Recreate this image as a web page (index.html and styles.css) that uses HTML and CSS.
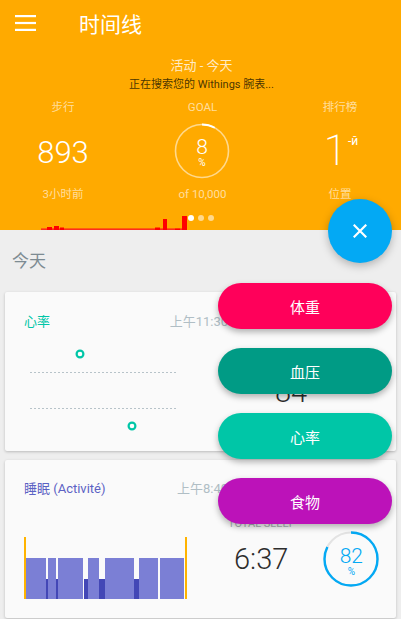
FILE: index.html
```html
<!DOCTYPE html>
<html lang="zh">
<head>
<meta charset="utf-8">
<title>时间线</title>
<link rel="stylesheet" href="styles.css">
</head>
<body>
<div class="app">
  <header class="hero">
    <div class="topbar">
      <svg class="menu" width="21" height="16" viewBox="0 0 21 16"><rect x="0" y="0" width="21" height="2.2" fill="#fff"/><rect x="0" y="6.9" width="21" height="2.2" fill="#fff"/><rect x="0" y="13.8" width="21" height="2.2" fill="#fff"/></svg>
      <div class="title">时间线</div>
    </div>
    <div class="status">
      <div class="status-main">活动 - 今天</div>
      <div class="status-sub">正在搜索您的 Withings 腕表...</div>
    </div>
    <div class="stats">
      <div class="stat">
        <div class="stat-label">步行</div>
        <div class="stat-value"><span class="big">893</span></div>
        <div class="stat-label">3小时前</div>
      </div>
      <div class="stat">
        <div class="stat-label">GOAL</div>
        <div class="stat-value">
          <div class="goal">
            <svg width="56" height="56" viewBox="0 0 56 56"><circle cx="28" cy="28" r="26.5" fill="none" stroke="rgba(255,255,255,0.55)" stroke-width="1.6"/><circle cx="28" cy="28" r="26.5" fill="none" stroke="#fff" stroke-width="1.8" stroke-dasharray="13.3 200" transform="rotate(-90 28 28)"/></svg>
            <div class="goal-text"><span class="goal-num">8</span><span class="goal-pct">%</span></div>
          </div>
        </div>
        <div class="stat-label">of 10,000</div>
      </div>
      <div class="stat">
        <div class="stat-label">排行榜</div>
        <div class="stat-value"><span class="rank">1</span><sup class="rank-sup">-й</sup></div>
        <div class="stat-label">位置</div>
      </div>
    </div>
    <div class="hero-foot">
      <svg class="bars" width="148" height="16" viewBox="0 0 148 16">
        <rect x="1" y="14.4" width="146" height="1.6" fill="#ff2d1a"/>
        <rect x="7" y="13" width="5" height="3" fill="#ff0000"/>
        <rect x="14" y="12" width="5" height="4" fill="#ff0000"/>
        <rect x="20" y="13.5" width="4" height="2.5" fill="#ff0000"/>
        <rect x="115" y="13.5" width="5" height="2.5" fill="#ff0000"/>
        <rect x="123" y="5" width="4" height="11" fill="#ff0000"/>
        <rect x="135" y="14.6" width="5" height="1.4" fill="#ff0000"/>
        <rect x="142" y="2" width="5" height="14" fill="#ff0000"/>
      </svg>
      <div class="dots"><span class="dot on"></span><span class="dot"></span><span class="dot"></span></div>
    </div>
  </header>

  <main class="feed">
    <div class="day">今天</div>

    <section class="card">
      <div class="col-left">
        <div class="card-head"><span class="card-title hr">心率</span><span class="card-time">上午11:30</span></div>
        <svg class="hr-chart" width="204" height="100" viewBox="0 0 204 100">
          <line x1="6" y1="32.5" x2="153" y2="32.5" stroke="#b7c3c9" stroke-width="1" stroke-dasharray="2 2"/>
          <line x1="6" y1="68.5" x2="153" y2="68.5" stroke="#b7c3c9" stroke-width="1" stroke-dasharray="2 2"/>
          <circle cx="56" cy="14" r="3.4" fill="#fff" stroke="#00c6a7" stroke-width="2.2"/>
          <circle cx="108" cy="86" r="3.4" fill="#fff" stroke="#00c6a7" stroke-width="2.2"/>
        </svg>
      </div>
      <div class="col-right hr-right">
        <div class="value">84</div>
      </div>
    </section>

    <section class="card sleep">
      <div class="col-left">
        <div class="card-head"><span class="card-title sl">睡眠 (Activité)</span><span class="card-time">上午8:40</span></div>
        <svg class="sleep-chart" width="164" height="62" viewBox="0 0 164 62">
          <g fill="#7b7fd5">
            <rect x="2" y="21" width="20" height="41"/>
            <rect x="24" y="21" width="8" height="41"/>
            <rect x="34" y="21" width="25" height="41"/>
            <rect x="64" y="21" width="11" height="41"/>
            <rect x="81" y="21" width="29" height="41"/>
            <rect x="115" y="21" width="19" height="41"/>
            <rect x="136" y="21" width="24" height="41"/>
          </g>
          <g fill="#4347b6">
            <rect x="22" y="42" width="2" height="20"/>
            <rect x="32" y="42" width="2" height="20"/>
            <rect x="60" y="42" width="4" height="20"/>
            <rect x="75" y="42" width="6" height="20"/>
            <rect x="110" y="42" width="5" height="20"/>
          </g>
          <rect x="0" y="0" width="2" height="62" fill="#ffb300"/>
          <rect x="161" y="0" width="2" height="62" fill="#ffb300"/>
        </svg>
      </div>
      <div class="col-right sleep-right">
        <div class="metric-label">TOTAL SLEEP</div>
        <div class="metric-row">
          <div class="value">6:37</div>
          <div class="ring">
            <svg width="56" height="56" viewBox="0 0 56 56"><circle cx="28" cy="28" r="26.5" fill="none" stroke="#e3e3e3" stroke-width="2"/><circle cx="28" cy="28" r="26.5" fill="none" stroke="#03a9f4" stroke-width="2.4" stroke-dasharray="136.5 200" transform="rotate(-90 28 28)"/></svg>
            <div class="ring-text"><span class="ring-num">82</span><span class="ring-pct">%</span></div>
          </div>
        </div>
      </div>
    </section>
  </main>

  <button class="fab" aria-label="关闭"><svg width="14" height="14" viewBox="0 0 14 14"><path d="M1.5 1.5 L12.5 12.5 M12.5 1.5 L1.5 12.5" stroke="#fff" stroke-width="2.2" stroke-linecap="square"/></svg></button>

  <div class="actions">
    <button class="pill pink">体重</button>
    <button class="pill green">血压</button>
    <button class="pill teal">心率</button>
    <button class="pill purple">食物</button>
  </div>
</div>
</body>
</html>
```

FILE: styles.css
```css
html, body {
  margin: 0;
  padding: 0;
}
body {
  background: #eeeeee;
  font-family: Roboto, "Noto Sans CJK SC", sans-serif;
}
.app {
  position: relative;
  width: 401px;
  height: 619px;
  overflow: hidden;
}
.hero {
  background: #ffaa00;
  height: 230px;
  color: #fff;
  display: flex;
  flex-direction: column;
}
.topbar {
  height: 46px;
  display: flex;
  align-items: center;
  padding-left: 15px;
}
.menu {
  display: block;
}
.title {
  margin-left: 43px;
  font-size: 21px;
  line-height: 26px;
  font-family: "Noto Sans CJK SC", sans-serif;
}
.status {
  margin-top: 12px;
  text-align: center;
  padding-left: 2px;
}
.status-main {
  font-size: 13px;
  line-height: 16px;
  color: rgba(255, 255, 255, 0.78);
}
.status-sub {
  margin-top: 4px;
  font-size: 11px;
  line-height: 14px;
  color: rgba(40, 28, 0, 0.85);
}
.stats {
  margin-top: 8px;
  display: grid;
  grid-template-columns: 126px 1fr 122px;
}
.stat {
  display: flex;
  flex-direction: column;
  align-items: center;
}
.stat-label {
  font-size: 11.5px;
  line-height: 14px;
  color: rgba(255, 255, 255, 0.62);
}
.stat-value {
  height: 73px;
  display: flex;
  align-items: center;
  justify-content: center;
}
.big {
  font-size: 31px;
  font-weight: 300;
  line-height: 1;
  margin-top: 3px;
}
.goal {
  position: relative;
  width: 56px;
  height: 56px;
  margin-right: 1px;
}
.goal svg {
  display: block;
}
.goal-text {
  position: absolute;
  inset: 0;
  display: flex;
  flex-direction: column;
  align-items: center;
  justify-content: center;
}
.goal-num {
  font-size: 21px;
  font-weight: 300;
  line-height: 21px;
  margin-top: 4px;
}
.goal-pct {
  font-size: 10px;
  line-height: 10px;
}
.rank {
  font-size: 42px;
  font-weight: 200;
  line-height: 1;
  margin-left: 2px;
}
.rank-sup {
  font-size: 12px;
  align-self: flex-start;
  margin-top: 20px;
  margin-left: 1px;
}
.hero-foot {
  flex: 1;
  display: flex;
  align-items: flex-end;
  padding-left: 40px;
}
.bars {
  display: block;
}
.dots {
  display: flex;
  gap: 4px;
  margin-left: 0;
  margin-bottom: 9px;
}
.dot {
  width: 6px;
  height: 6px;
  border-radius: 50%;
  background: rgba(255, 255, 255, 0.55);
}
.dot.on {
  background: #fff;
}
.feed {
  padding: 0 5px;
}
.day {
  margin-top: 19px;
  padding-left: 7px;
  font-size: 17px;
  line-height: 24px;
  color: #7d8b92;
}
.card {
  background: #fafafa;
  border-radius: 2px;
  box-shadow: 0 1px 3px rgba(0, 0, 0, 0.22);
  display: flex;
  margin-top: 19px;
  padding: 21px 0 11px 19px;
}
.card.sleep {
  margin-top: 9px;
  padding-top: 20px;
  padding-bottom: 19px;
}
.col-left {
  width: 204px;
}
.card-head {
  display: flex;
  justify-content: space-between;
  font-size: 13px;
  line-height: 18px;
}
.card-title.hr {
  color: #00c6a7;
}
.card-title.sl {
  color: #5c62c4;
}
.card-time {
  color: #b0bec5;
}
.hr-chart {
  display: block;
  margin-top: 9px;
}
.sleep-chart {
  display: block;
  margin-top: 39px;
}
.col-right {
  flex: 1;
}
.hr-right {
  padding-left: 47px;
  padding-top: 65px;
}
.value {
  font-size: 29px;
  font-weight: 300;
  line-height: 1;
  color: #2d2d2d;
}
.sleep-right {
  padding-top: 37px;
}
.metric-label {
  font-size: 11px;
  line-height: 14px;
  color: #aab2b6;
}
.metric-row {
  display: flex;
  align-items: center;
  height: 56px;
}
.metric-row .value {
  margin-left: 6px;
}
.ring {
  position: relative;
  width: 56px;
  height: 56px;
  margin-left: 35px;
}
.ring svg {
  display: block;
}
.ring-text {
  position: absolute;
  inset: 0;
  display: flex;
  flex-direction: column;
  align-items: center;
  justify-content: center;
  color: #03a9f4;
}
.ring-num {
  font-size: 21px;
  font-weight: 300;
  line-height: 21px;
  margin-top: 4px;
}
.ring-pct {
  font-size: 10px;
  line-height: 10px;
}
.fab {
  position: absolute;
  left: 328px;
  top: 199px;
  width: 64px;
  height: 64px;
  border: none;
  border-radius: 50%;
  background: #03a9f4;
  box-shadow: 0 3px 8px rgba(0, 0, 0, 0.25);
  display: flex;
  align-items: center;
  justify-content: center;
  padding: 0;
}
.fab svg {
  display: block;
}
.actions {
  position: absolute;
  left: 218px;
  top: 283px;
  width: 174px;
  display: flex;
  flex-direction: column;
  gap: 19px;
}
.pill {
  height: 46px;
  border: none;
  border-radius: 23px;
  color: #fff;
  font-family: "Noto Sans CJK SC", sans-serif;
  font-size: 15px;
  box-shadow: 0 3px 6px rgba(0, 0, 0, 0.3);
  padding: 0;
}
.pill.pink {
  background: #ff005a;
}
.pill.green {
  background: #009b85;
}
.pill.teal {
  background: #00c6a7;
}
.pill.purple {
  background: #bc12b9;
}
```
